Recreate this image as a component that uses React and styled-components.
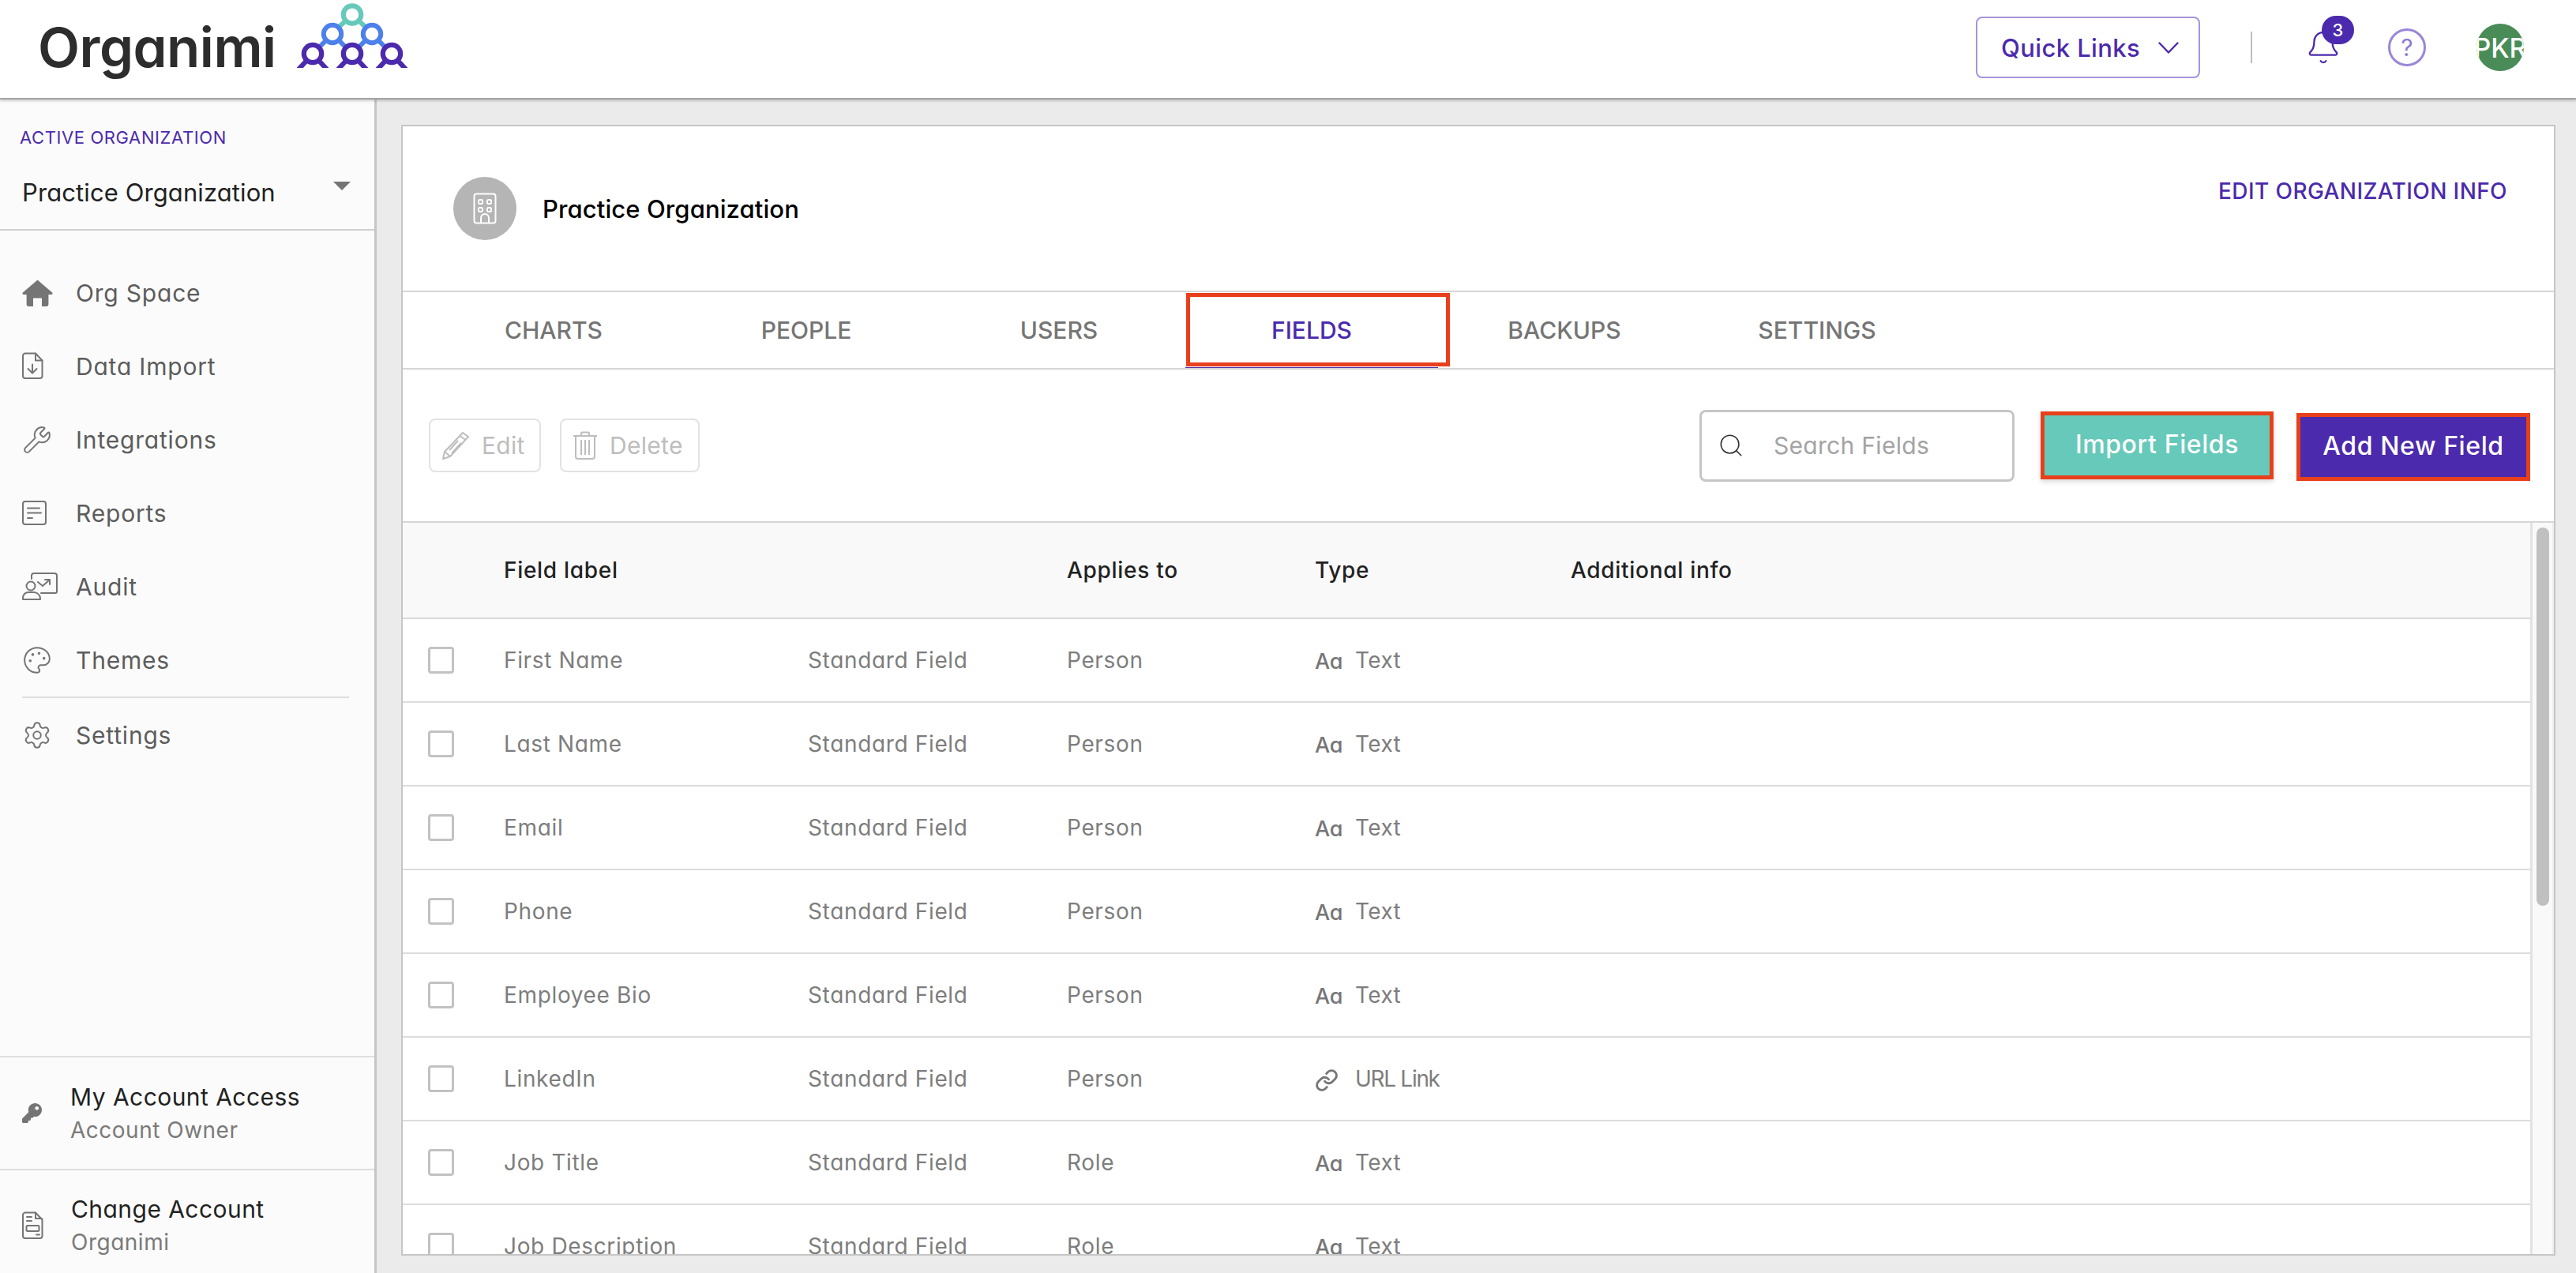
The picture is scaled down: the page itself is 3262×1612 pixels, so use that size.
import React from 'react';
import styled, { createGlobalStyle } from 'styled-components';
import { Wrench, Palette, Settings, Search, Link as LinkIcon, Bell } from 'lucide-react';
import { FaKey } from 'react-icons/fa';

const PURPLE = '#4b2aad';
const TEAL = '#66c9b9';
const RED = '#e8401c';

const Global = createGlobalStyle`
  html, body { margin: 0; padding: 0; width: 3262px; height: 1612px; overflow: hidden; background: #ebebeb; }
  body, button, input { font-family: Inter, "Noto Sans", "Liberation Sans", sans-serif; font-feature-settings: "cv11" 1; }
  * { box-sizing: border-box; }
`;

const Page = styled.div`
  width: 3262px; height: 1612px; display: flex; flex-direction: column; background: #ebebeb;
`;

const Header = styled.header`
  height: 126px; flex: none; display: flex; align-items: center; justify-content: space-between;
  padding: 0 66px 4px 48px; background: #fff; border-bottom: 2px solid #a3a3a3;
  box-shadow: 0 2px 3px rgba(0,0,0,.18); position: relative; z-index: 2;
`;
const LogoGroup = styled.div`display: flex; align-items: flex-start; gap: 26px; height: 86px; align-self: flex-start; margin-top: 4px;`;
const LogoText = styled.span`
  font-size: 69px; font-weight: 600; color: #2d2d2d; letter-spacing: -0.5px; line-height: 1; margin-top: 22px;
`;
const HeaderRight = styled.div`display: flex; align-items: center;`;
const QuickLinks = styled.button`
  width: 284px; height: 78px; display: flex; align-items: center; gap: 23px; padding: 0 0 0 30px;
  background: #fff; border: 2px solid #a595dc; border-radius: 8px; color: ${PURPLE};
  font-size: 31px; font-weight: 500; letter-spacing: .4px;
`;
const HeaderDivider = styled.span`width: 2px; height: 40px; background: #bdbdbd; margin: 0 67px 0 64px;`;
const BellWrap = styled.span`position: relative; width: 46px; height: 46px; color: ${PURPLE}; display: block; margin-right: 59px;`;
const Badge = styled.span`
  position: absolute; left: 21px; top: -17px; width: 41px; height: 36px; border-radius: 18px; background: ${PURPLE};
  color: #fff; font-size: 22px; font-weight: 500; display: flex; align-items: center; justify-content: center;
`;
const HelpCircle = styled.span`
  width: 48px; height: 48px; border-radius: 50%; border: 3px solid #9a86d8; color: #8f7ad3; font-size: 30px; font-weight: 400;
  display: flex; align-items: center; justify-content: center; margin-right: 64px;
`;
const Avatar = styled.span`
  width: 60px; height: 60px; border-radius: 50%; background: #4a8c57; color: #fff; font-size: 34px; font-weight: 500;
  overflow: hidden; display: flex; align-items: center; justify-content: center; white-space: nowrap;
`;

const Body = styled.div`flex: 1; display: flex; min-height: 0;`;

const Sidebar = styled.aside`
  width: 477px; flex: none; display: flex; flex-direction: column; background: #fbfbfb; border-right: 3px solid #c6c6c6;
`;
const OrgBlock = styled.div`
  height: 166px; flex: none; border-bottom: 2px solid #cfcfcf; padding: 34px 30px 0 25px; position: relative;
`;
const OrgLabel = styled.div`font-size: 22px; line-height: 28px; color: ${PURPLE}; letter-spacing: .6px;`;
const OrgSelect = styled.div`
  margin-top: 34px; padding-left: 3px; display: flex; justify-content: space-between; align-items: center;
  font-size: 31px; line-height: 44px; color: #222; letter-spacing: .1px;
`;
const Caret = styled.span`
  width: 0; height: 0; border-left: 11px solid transparent; border-right: 11px solid transparent; border-top: 11px solid #757575;
  margin-top: -18px;
`;
const Nav = styled.nav`padding-top: 32px; flex: 1; display: flex; flex-direction: column;`;
const NavItem = styled.a`
  height: 93px; display: flex; align-items: center; padding-left: 28px; color: #5c5c5c; font-size: 30px; letter-spacing: .8px;
`;
const NavIcon = styled.span`width: 68px; flex: none; display: flex; align-items: center; color: #757575;`;
const NavRule = styled.hr`margin: 0 32px 0 28px; width: 414px; height: 2px; border: 0; background: #dedede; flex: none;`;
const AccountRow = styled.div`
  height: ${p => p.$h}px; flex: none; border-top: 2px solid #dedede; display: flex; align-items: center;
  padding: ${p => p.$pt}px 0 0 28px;
`;
const AccountIcon = styled.span`width: ${p => p.$w}px; flex: none; color: #757575; display: flex; align-items: center;`;
const AccountText = styled.div`display: flex; flex-direction: column; gap: 2px;`;
const AccountTitle = styled.span`font-size: 30px; line-height: 40px; color: #222; letter-spacing: .45px;`;
const AccountSub = styled.span`font-size: 28px; line-height: 40px; color: #7a7a7a; letter-spacing: .5px;`;

const Main = styled.main`flex: 1; min-width: 0; padding: 32px 26px 22px 31px; display: flex;`;
const Card = styled.section`
  flex: 1; min-width: 0; display: flex; flex-direction: column; background: #fff; border: 2px solid #c6c6c6;
`;
const OrgHeader = styled.div`
  height: 208px; flex: none; display: flex; align-items: center; padding: 0 59px 0 64px;
`;
const OrgCircle = styled.span`
  width: 80px; height: 80px; border-radius: 50%; background: #b5b5b5; flex: none; display: flex; align-items: center; justify-content: center;
`;
const OrgName = styled.h1`
  margin: 0 0 0 33px; font-size: 31px; font-weight: 500; color: #000; letter-spacing: .1px;
`;
const EditInfo = styled.a`
  margin: -44px 0 0 auto; font-size: 28px; font-weight: 500; color: ${PURPLE}; letter-spacing: .4px;
`;
const TabBar = styled.div`
  height: 100px; flex: none; display: flex; padding-left: 31px; border-top: 2px solid #d6d6d6; border-bottom: 2px solid #d6d6d6;
`;
const Tab = styled.a`
  width: 320px; height: 96px; flex: none; display: flex; align-items: center; justify-content: center; position: relative;
  font-size: 30px; font-weight: 500; color: ${p => p.$active ? PURPLE : '#757575'};
  border-bottom: ${p => p.$active ? `1px solid ${PURPLE}` : '0'};
`;
const Highlight = styled.span`
  position: absolute; border: 5px solid ${RED}; pointer-events: none;
  left: ${p => p.$l}px; top: ${p => p.$t}px; right: ${p => p.$r}px; bottom: ${p => p.$b}px;
`;
const Toolbar = styled.div`
  height: 192px; flex: none; display: flex; align-items: center; padding: 0 30px 0 33px;
`;
const GhostButton = styled.button`
  height: 68px; display: flex; align-items: center; gap: 15px; background: #fff; padding: 0 0 0 14px;
  width: ${p => p.$w}px; margin-right: ${p => p.$mr}px; border: 2px solid #e2e2e2; border-radius: 8px;
  color: #bdbdbd; font-size: 30px; letter-spacing: .3px;
`;
const SearchBox = styled.div`
  width: 399px; height: 91px; margin-left: auto; display: flex; align-items: center; gap: 37px; padding-left: 20px;
  border: 3px solid #c6c6c6; border-radius: 8px; font-size: 30px; letter-spacing: .3px; color: #a3a3a3;
`;
const ActionButton = styled.button`
  height: 86px; width: ${p => p.$w}px; margin-left: ${p => p.$ml}px; margin-top: ${p => p.$mt}px; border: 5px solid ${RED};
  background: ${p => p.$bg}; color: #fff; font-size: 32px; font-weight: 500; letter-spacing: .6px; padding: 0 0 3px;
  box-shadow: ${p => p.$shadow ? '0 3px 6px rgba(0,0,0,.15)' : 'none'};
`;
const TableWrap = styled.div`
  flex: 1; min-height: 0; display: flex; border-top: 2px solid #d6d6d6; overflow: hidden;
`;
const Table = styled.div`flex: 1; min-width: 0; overflow: hidden;`;
const cols = '128px 385px 328px 314px 324px 1fr';
const HeadRow = styled.div`
  height: 122px; display: grid; grid-template-columns: ${cols}; align-items: center; background: #f9f9f9;
  border-bottom: 2px solid #d9d9d9; font-size: 28px; font-weight: 500; color: #222; letter-spacing: .7px;
`;
const Row = styled.div`
  height: 106px; flex: none; display: grid; grid-template-columns: ${cols}; align-items: center;
  border-bottom: 2px solid #dcdcdc; font-size: 28px; color: #7d7d7d; letter-spacing: .65px;
`;
const CheckBox = styled.span`
  display: block; width: 33px; height: 34px; margin-left: 32px; border: 3px solid #c2c2c2; border-radius: 4px;
`;
const TypeCell = styled.div`display: flex; align-items: center; gap: 19px;`;
const TypeIcon = styled.span`
  width: 32px; flex: none; font-size: 27px; font-weight: 500; color: #767676; letter-spacing: -.3px; display: flex; align-items: center;
  padding-top: 3px;
`;
const TypeLabel = styled.span`letter-spacing: ${p => p.$tight ? '-1.3px' : '.4px'};`;
const ScrollTrack = styled.div`
  width: 30px; flex: none; background: #f9f9f9; border-left: 3px solid #e2e2e2; border-right: 2px solid #eee; padding: 6px 0 0 5px;
`;
const ScrollThumb = styled.div`width: 16px; height: 479px; border-radius: 8px; background: #c0c0c0;`;

const LogoMark = () => {
  const blue = '#4d80ea';
  return (
    <svg width="142" height="82" viewBox="0 0 142 82" fill="none">
      <g stroke={TEAL} strokeWidth="6">
        <line x1="60" y1="24" x2="52" y2="31" />
        <line x1="80" y1="24" x2="88" y2="31" />
      </g>
      <g stroke={blue} strokeWidth="6">
        <line x1="36" y1="48" x2="28" y2="56" />
        <line x1="54" y1="48" x2="62" y2="56" />
        <line x1="86" y1="48" x2="78" y2="56" />
        <line x1="104" y1="48" x2="112" y2="56" />
        <circle cx="45" cy="39" r="11.2" />
        <circle cx="95" cy="39" r="11.2" />
      </g>
      <circle cx="70" cy="14.5" r="11.2" stroke={TEAL} strokeWidth="6.2" />
      <g stroke={PURPLE} strokeWidth="6.2">
        {[20, 70, 120].map(c => (
          <g key={c}>
            <circle cx={c} cy="64" r="11.2" />
            <line x1={c - 8} y1="73" x2={c - 19} y2="85" />
            <line x1={c + 8} y1="73" x2={c + 19} y2="85" />
          </g>
        ))}
      </g>
    </svg>
  );
};

const HomeIcon = () => (
  <svg width="39" height="34" viewBox="0 0 39 34" fill="currentColor">
    <path d="M19.5 0.5 38.2 16.6Q39.4 19 36.6 19H33.4V31.6Q33.4 34 31 34H25V23.5H14V34H8Q5.6 34 5.6 31.6V19H2.4Q-.4 19 .8 16.6Z" />
  </svg>
);
const ChevronIcon = () => (
  <svg width="26" height="15" viewBox="0 0 26 15" fill="none" stroke="currentColor" strokeWidth="2.4" strokeLinecap="round" strokeLinejoin="round">
    <path d="M1.5 1.5 13 13.5 24.5 1.5" />
  </svg>
);
const FileImportIcon = () => (
  <svg width="27" height="35" viewBox="0 0 27 35" fill="none" stroke="currentColor" strokeWidth="2" strokeLinejoin="round" strokeLinecap="round">
    <path d="M4 1.5H17L25.5 10.5V30a3 3 0 0 1-3 3H4a3 3 0 0 1-3-3V4.5a3 3 0 0 1 3-3Z" />
    <path d="M17 1.5V10.5H25.5" />
    <path d="M13 15.5V26M7.5 21l5.5 5.5 5.5-5.5" />
  </svg>
);
const ReportIcon = () => (
  <svg width="31" height="31" viewBox="0 0 31 31" fill="none" stroke="currentColor" strokeWidth="2" strokeLinecap="round">
    <rect x="1" y="1" width="29" height="29" rx="3" />
    <path d="M7 9.5H22M7 15.5H24M7 22H13" />
  </svg>
);
const AuditIcon = () => (
  <svg width="45" height="35" viewBox="0 0 45 35" fill="none" stroke="currentColor" strokeWidth="2" strokeLinecap="round" strokeLinejoin="round">
    <path d="M12 8V4a3 3 0 0 1 3-3h26a3 3 0 0 1 3 3v20a2 2 0 0 1-2 2H24" />
    <circle cx="11" cy="17" r="5.5" />
    <path d="M1 34v-2a7 7 0 0 1 7-7h7a8 8 0 0 1 8 8v1Z" />
    <path d="M20 12l6 5 9-8M29 9h6v6" />
  </svg>
);
const DocIcon = () => (
  <svg width="27" height="36" viewBox="0 0 27 36" fill="none" stroke="currentColor" strokeWidth="2" strokeLinejoin="round" strokeLinecap="round">
    <path d="M4 1.5H17L25.5 10.5V31a3 3 0 0 1-3 3H4a3 3 0 0 1-3-3V4.5a3 3 0 0 1 3-3Z" />
    <path d="M6 7h6M6 12h6M17 1.5V9h8M18 29.5h4" />
    <rect x="5.5" y="18" width="16" height="7" rx="1.5" />
  </svg>
);
const PencilIcon = () => (
  <svg width="36" height="36" viewBox="0 0 36 36" fill="none" stroke="#bdbdbd" strokeWidth="2" strokeLinejoin="round">
    <path d="M27 2l7 5L11 32 2 35l2-9Z" />
    <path d="M23.5 6l7 5M4 26l7 6M21 12 10 24M25 15 13 28" />
  </svg>
);
const TrashIcon = () => (
  <svg width="32" height="36" viewBox="0 0 32 36" fill="none" stroke="#bdbdbd" strokeWidth="2" strokeLinejoin="round">
    <path d="M1 6H31M11 6V2.5a1 1 0 0 1 1-1h8a1 1 0 0 1 1 1V6" />
    <path d="M4 6v26a3 3 0 0 0 3 3h18a3 3 0 0 0 3-3V6" />
    <path d="M11 11v19M16 11v19M21 11v19" />
  </svg>
);
const BuildingIcon = () => (
  <svg width="30" height="40" viewBox="0 0 30 40" fill="none" stroke="#fff" strokeWidth="2" strokeLinejoin="round">
    <rect x="1.5" y="1.5" width="27" height="37" rx="3" />
    <rect x="7" y="9" width="5" height="5" rx="1.5" />
    <rect x="18" y="9" width="5" height="5" rx="1.5" />
    <rect x="7" y="19" width="5" height="5" rx="1.5" />
    <rect x="18" y="19" width="5" height="5" rx="1.5" />
    <path d="M10 38V32a5 5 0 0 1 10 0v6" />
  </svg>
);

const navItems = [
  ['Org Space', <HomeIcon />],
  ['Data Import', <FileImportIcon />],
  ['Integrations', <Wrench size={38} strokeWidth={1.25} />],
  ['Reports', <ReportIcon />],
  ['Audit', <AuditIcon />],
  ['Themes', <Palette size={38} strokeWidth={1.25} />],
];

const rows = [
  ['First Name', 'Person', 'text'],
  ['Last Name', 'Person', 'text'],
  ['Email', 'Person', 'text'],
  ['Phone', 'Person', 'text'],
  ['Employee Bio', 'Person', 'text'],
  ['LinkedIn', 'Person', 'url'],
  ['Job Title', 'Role', 'text'],
  ['Job Description', 'Role', 'text'],
];

const tabs = ['CHARTS', 'PEOPLE', 'USERS', 'FIELDS', 'BACKUPS', 'SETTINGS'];

export default function App() {
  return (
    <Page>
      <Global />
      <Header>
        <LogoGroup>
          <LogoText>Organimi</LogoText>
          <LogoMark />
        </LogoGroup>
        <HeaderRight>
          <QuickLinks>Quick Links <ChevronIcon /></QuickLinks>
          <HeaderDivider />
          <BellWrap>
            <Bell size={46} strokeWidth={1.2} />
            <Badge>3</Badge>
          </BellWrap>
          <HelpCircle>?</HelpCircle>
          <Avatar>PKR</Avatar>
        </HeaderRight>
      </Header>
      <Body>
        <Sidebar>
          <OrgBlock>
            <OrgLabel>ACTIVE ORGANIZATION</OrgLabel>
            <OrgSelect>Practice Organization <Caret /></OrgSelect>
          </OrgBlock>
          <Nav>
            {navItems.map(([label, icon]) => (
              <NavItem key={label}><NavIcon>{icon}</NavIcon>{label}</NavItem>
            ))}
            <NavRule />
            <NavItem><NavIcon><Settings size={38} strokeWidth={1.25} /></NavIcon>Settings</NavItem>
          </Nav>
          <AccountRow $h={143} $pt={0}>
            <AccountIcon $w={61}><FaKey size={25} /></AccountIcon>
            <AccountText>
              <AccountTitle>My Account Access</AccountTitle>
              <AccountSub>Account Owner</AccountSub>
            </AccountText>
          </AccountRow>
          <AccountRow $h={132} $pt={10}>
            <AccountIcon $w={62}><DocIcon /></AccountIcon>
            <AccountText>
              <AccountTitle>Change Account</AccountTitle>
              <AccountSub>Organimi</AccountSub>
            </AccountText>
          </AccountRow>
        </Sidebar>
        <Main>
          <Card>
            <OrgHeader>
              <OrgCircle><BuildingIcon /></OrgCircle>
              <OrgName>Practice Organization</OrgName>
              <EditInfo>EDIT ORGANIZATION INFO</EditInfo>
            </OrgHeader>
            <TabBar>
              {tabs.map(t => (
                <Tab key={t} $active={t === 'FIELDS'}>
                  {t}
                  {t === 'FIELDS' && <Highlight $l={1} $t={1} $r={-15} $b={1} />}
                </Tab>
              ))}
            </TabBar>
            <Toolbar>
              <GhostButton $w={142} $mr={24}><PencilIcon />Edit</GhostButton>
              <GhostButton $w={177} $mr={0}><TrashIcon />Delete</GhostButton>
              <SearchBox><Search size={34} strokeWidth={1.1} color="#333" />Search Fields</SearchBox>
              <ActionButton $w={295} $ml={33} $mt={0} $bg={TEAL} $shadow>Import Fields</ActionButton>
              <ActionButton $w={296} $ml={29} $mt={4} $bg={PURPLE}>Add New Field</ActionButton>
            </Toolbar>
            <TableWrap>
              <Table>
                <HeadRow>
                  <span />
                  <span>Field label</span>
                  <span />
                  <span>Applies to</span>
                  <span>Type</span>
                  <span>Additional info</span>
                </HeadRow>
                {rows.map(([label, applies, type]) => (
                  <Row key={label}>
                    <CheckBox />
                    <span>{label}</span>
                    <span>Standard Field</span>
                    <span>{applies}</span>
                    <TypeCell>
                      <TypeIcon>{type === 'url' ? <LinkIcon size={30} strokeWidth={2.3} /> : 'Aa'}</TypeIcon>
                      <TypeLabel $tight={type === 'url'}>{type === 'url' ? 'URL Link' : 'Text'}</TypeLabel>
                    </TypeCell>
                    <span />
                  </Row>
                ))}
              </Table>
              <ScrollTrack><ScrollThumb /></ScrollTrack>
            </TableWrap>
          </Card>
        </Main>
      </Body>
    </Page>
  );
}
